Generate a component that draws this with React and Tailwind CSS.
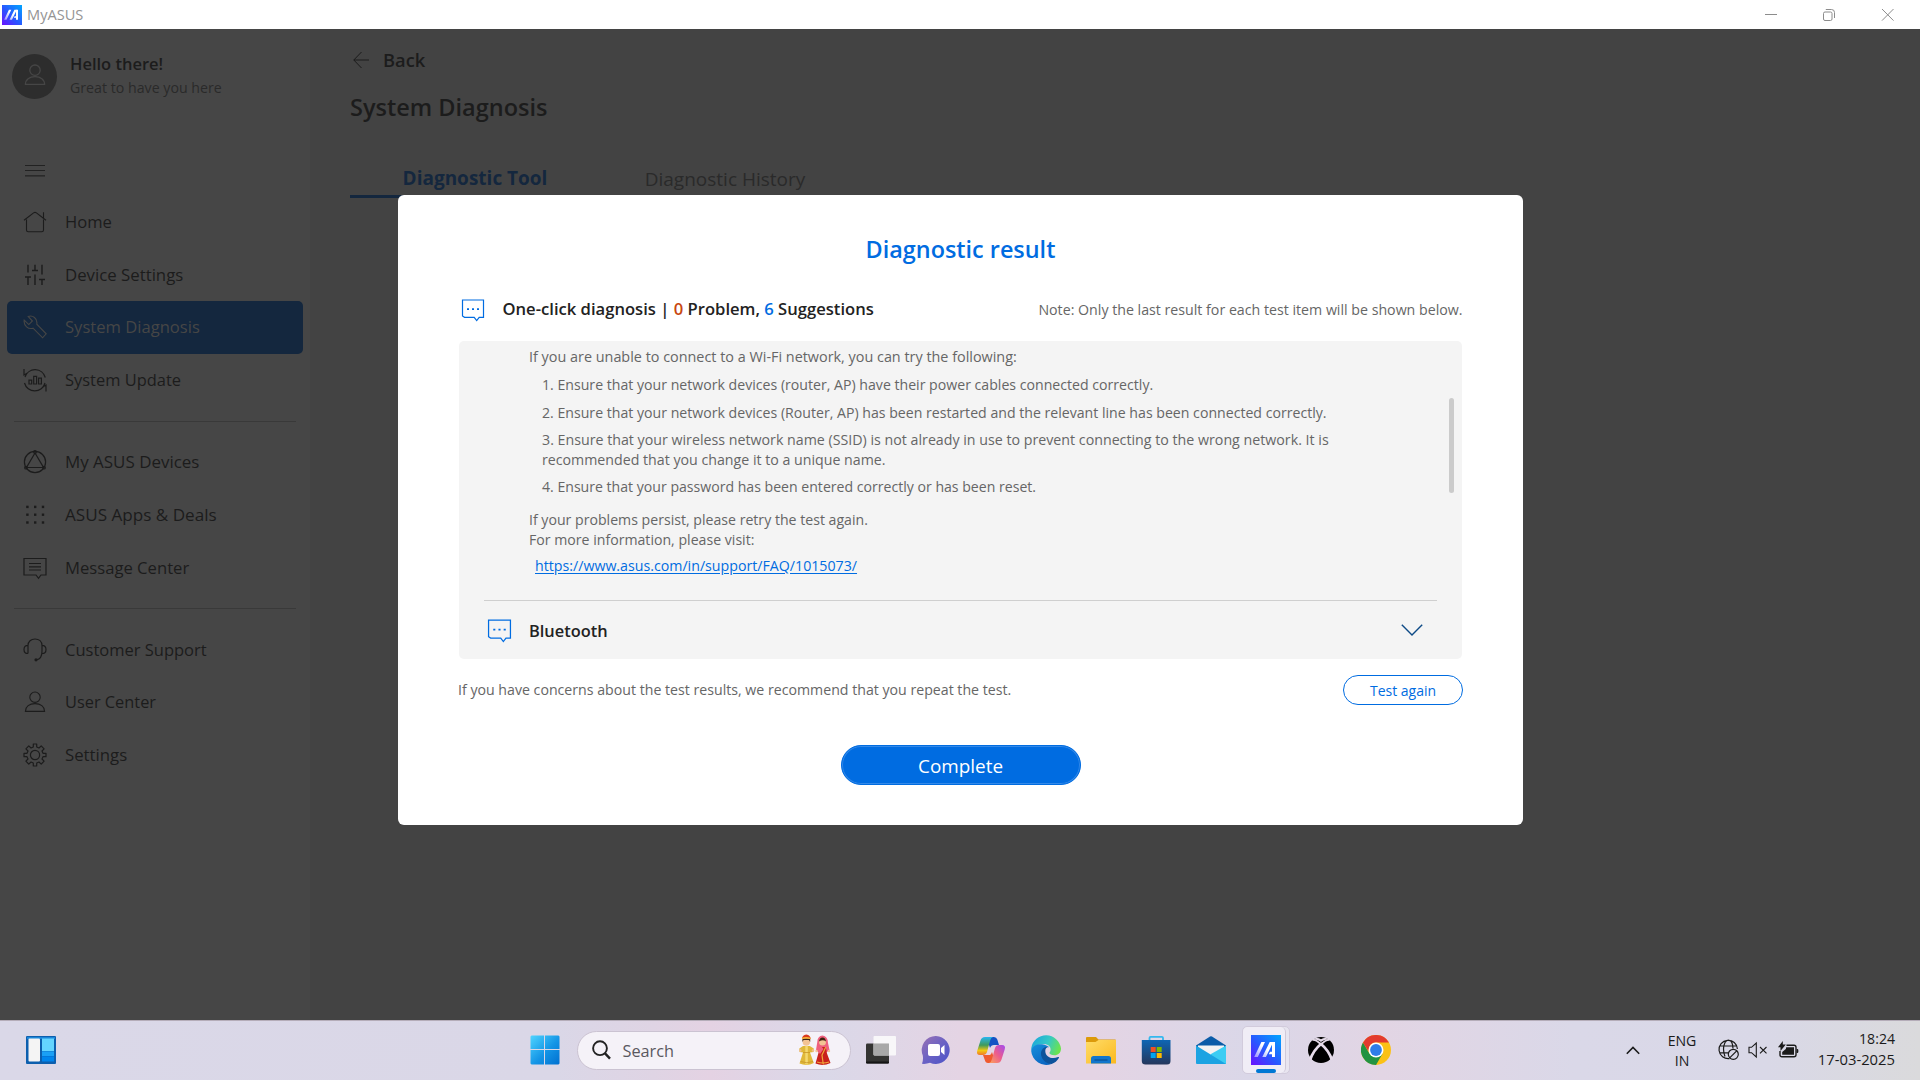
const navGroups = [
  [
    { label: "Home", icon: HomeIcon, size: "text-[16.6px]" },
    { label: "Device Settings", icon: SlidersIcon, size: "text-[16.8px]" },
    { label: "System Diagnosis", icon: WrenchIcon, size: "text-[16.6px]", active: true },
    { label: "System Update", icon: UpdateIcon, size: "text-[16.45px]" },
  ],
  [
    { label: "My ASUS Devices", icon: DevicesIcon, size: "text-[16.95px]" },
    { label: "ASUS Apps & Deals", icon: DotsIcon, size: "text-[17.1px]" },
    { label: "Message Center", icon: MessageIcon, size: "text-[16.65px]" },
  ],
  [
    { label: "Customer Support", icon: HeadsetIcon, size: "text-[16.5px]" },
    { label: "User Center", icon: UserIcon, size: "text-[16.35px]" },
    { label: "Settings", icon: GearIcon, size: "text-[16.8px]" },
  ],
];

function Line({ children, className = "", w = 1.1, size = 24 }) {
  return (
    <svg width={size} height={size} viewBox="0 0 24 24" fill="none" stroke="currentColor" strokeWidth={w} className={`shrink-0 ${className}`}>
      {children}
    </svg>
  );
}

function HomeIcon() {
  return (
    <Line>
      <path d="M1 10.3 10.6 2.9Q12 1.9 13.4 2.9L23 10.3M20.5 8V2.3M3.5 9.5V20Q3.5 21.8 5.3 21.8H18.7Q20.5 21.8 20.5 20V9.5" />
    </Line>
  );
}
function SlidersIcon() {
  return (
    <Line w={1.4}>
      <path d="M5 1.8V9.5M12 1.8V7.5M19 1.8V11.5M9 7.5H15M2 14H8M5 14V22M12 11.5V22M16 16.5H22M19 16.5V22" />
    </Line>
  );
}
function WrenchIcon() {
  return (
    <Line>
      <path d="M5.2 1.5C9.5-.2 14.8 3.2 13.8 9.2L23.2 18.8 19.6 22.8 10 13.2C5.5 14.6 .3 10.8 1.2 5.2L5.8 9.6 9.4 6Z" />
    </Line>
  );
}
function UpdateIcon() {
  return (
    <Line w={1.2}>
      <path d="M2 9A10.6 10.6 0 0 1 22.3 9.5M1 1V7L4.5 5M22 15A10.6 10.6 0 0 1 1.5 15M23 23.5V17L19.5 19M6 12.2H8.7V16H6ZM10.7 8.4H13.6V16H10.7ZM15.6 10.2H18.4V16H15.6Z" />
    </Line>
  );
}
function DevicesIcon() {
  return (
    <Line w={1.2}>
      <circle cx="12" cy="12" r="10.6" />
      <path d="M12 3 3.5 17.5H20.5Z" />
      <circle cx="12" cy="2" r="1.3" />
      <circle cx="3" cy="17.7" r="1.3" />
      <circle cx="21" cy="17.7" r="1.3" />
    </Line>
  );
}
function DotsIcon() {
  const p = [3.2, 11, 18.8];
  return (
    <Line>
      {p.map((y) => p.map((x) => <rect key={`${x}-${y}`} x={x} y={y - 0.5} width="2.4" height="2.4" fill="currentColor" stroke="none" />))}
    </Line>
  );
}
function MessageIcon() {
  return (
    <Line w={1.2}>
      <path d="M1 2.5H23V19H18L15.5 22.3 13 19H1ZM6 7.5H18M6 10.8H18M6 14H18" />
    </Line>
  );
}
function HeadsetIcon() {
  return (
    <Line w={1.2}>
      <path d="M5 15.5V7.6C5 3.5 8 1 12 1S19 3.5 19 7.6V13C19 18 17.5 21.3 13.5 21.8M5 7.3C2.5 7.3 1 9 1 11.4S2.5 15.5 5 15.5M19 7.3C21.5 7.3 23 9 23 11.4S21.5 15.5 19 15.5" />
      <circle cx="13" cy="21.8" r="1.6" fill="currentColor" stroke="none" />
    </Line>
  );
}
function UserIcon({ w = 1.1 }) {
  return (
    <Line w={w}>
      <circle cx="12" cy="7.2" r="5.2" />
      <path d="M2.4 21.4C2.4 16.5 6.5 13.6 12 13.6S21.6 16.5 21.6 21.4Z" />
    </Line>
  );
}
function GearIcon() {
  return (
    <Line w={1.2}>
      <circle cx="12" cy="12" r="4.6" />
      <path d="M10.3 1H13.7V4L16 5 18.2 2.9 21.1 5.8 19 8 20 10.3H23V13.7H20L19 16 21.1 18.2 18.2 21.1 16 19 13.7 20V23H10.3V20L8 19 5.8 21.1 2.9 18.2 5 16 4 13.7H1V10.3H4L5 8 2.9 5.8 5.8 2.9 8 5 10.3 4Z" strokeLinejoin="round" />
    </Line>
  );
}

function MyAsusLogo({ size }) {
  return (
    <svg width={size} height={size} viewBox="0 0 30 30" className="shrink-0">
      <defs>
        <linearGradient id="ma" x1="0" y1="1" x2="1" y2="0">
          <stop offset="0" stopColor="#6a10ff" />
          <stop offset=".45" stopColor="#2a55ff" />
          <stop offset="1" stopColor="#00a6ff" />
        </linearGradient>
        <linearGradient id="mb" x1="0" y1="1" x2="1" y2="0">
          <stop offset="0" stopColor="#fff" stopOpacity=".45" />
          <stop offset=".6" stopColor="#fff" />
        </linearGradient>
      </defs>
      <path fill="url(#ma)" d="M0 0H30V30H0Z" />
      <path fill="url(#mb)" d="M3.2 22 10.4 7H14L6.8 22ZM11.3 22 18.7 7H22.3L14.9 22Z" />
      <path fill="#fff" d="M20.8 7H24V22H21V19.2H17.8L19 16.8H21V10Z" />
    </svg>
  );
}

function SuggestionIcon({ size = 24 }) {
  return (
    <Line size={size} w={1.2} className="text-[#006ce1]">
      <path d="M1.5 2H22.5V19.3H18.2L15.7 22.6 13.2 19.3H3.5L1.5 18Z" />
      <path stroke="none" fill="currentColor" d="M6 10.2H8V12H6ZM11 10.2H13V12H11ZM16 10.2H18V12H16Z" />
    </Line>
  );
}

function TitleBar() {
  return (
    <header className="flex h-[29px] items-center bg-white pl-[2px]">
      <MyAsusLogo size={20} />
      <span className="ml-[5px] text-[14.6px] leading-[29px] text-[#949494]">MyASUS</span>
      <div className="ml-auto flex text-[#8c8c8c]">
        <svg width="58" height="28" viewBox="0 0 58 28" fill="none" stroke="currentColor">
          <path d="M23 13.5H35" />
        </svg>
        <svg width="59" height="28" viewBox="0 0 59 28" fill="none" stroke="currentColor">
          <rect x="23.5" y="11" width="8.5" height="8.5" rx="1.5" />
          <path d="M25.8 8.5H31.5Q34.5 8.5 34.5 11.5V17" />
        </svg>
        <svg width="61" height="28" viewBox="0 0 61 28" fill="none" stroke="currentColor">
          <path d="M23 8 34.5 19.6M34.5 8 23 19.6" />
        </svg>
      </div>
    </header>
  );
}

function NavItem({ label, icon: Icon, active, size }) {
  return (
    <li className={`ml-[7px] flex h-[52.6px] w-[296px] items-center rounded-[5px] pl-4 ${active ? "bg-[#14273e] text-[#464646]" : "text-[#1c1c1c]"}`}>
      <Icon />
      <span className={`ml-[18px] leading-[24px] whitespace-nowrap ${size}`}>{label}</span>
    </li>
  );
}

function Sidebar() {
  return (
    <aside className="w-[310px] bg-[#464646]">
      <div className="flex h-[92px] items-start pt-[25px] pl-[12px]">
        <div className="flex h-[45px] w-[45px] items-center justify-center rounded-full bg-[#2d2d2d] pb-[3px] text-[#464646]">
          <UserIcon w={1.3} />
        </div>
        <div className="ml-[13px] text-[#1c1c1c]">
          <div className="-mt-[2px] text-[16.5px] leading-[24px] font-semibold">Hello there!</div>
          <div className="text-[14.2px] leading-[24px] text-[#2a2a2a]">Great to have you here</div>
        </div>
      </div>
      <div className="h-[75px] pt-[38px] pl-[25px] text-[#222]">
        <svg width="20" height="24" viewBox="0 0 20 24" fill="none" stroke="currentColor" strokeWidth="1.2">
          <path d="M0 6.5H20M0 11.5H20M0 16.8H20" />
        </svg>
      </div>
      {navGroups.map((group, i) => (
        <div key={group[0].label}>
          {i > 0 && (
            <div className="flex h-[29.7px] items-center pl-[14px]">
              <div className="h-px w-[282px] bg-[#393939]" />
            </div>
          )}
          <ul>
            {group.map((item) => (
              <NavItem key={item.label} {...item} />
            ))}
          </ul>
        </div>
      ))}
    </aside>
  );
}

function DiagnosisPage() {
  return (
    <main className="flex-1 bg-[#434343] pl-[40px] text-[#1c1c1c]">
      <div className="flex h-[62px] items-center">
        <svg width="16" height="18" viewBox="0 0 16 18" fill="none" stroke="currentColor" className="ml-[3px]">
          <path d="M8.5 1 .8 9 8.5 17M.8 9H16" />
        </svg>
        <span className="ml-[14px] text-[18.3px] leading-[26px] font-semibold">Back</span>
      </div>
      <h1 className="text-[23.5px] leading-[32px] font-semibold">System Diagnosis</h1>
      <div className="mt-[39px] flex">
        <div className="flex h-[36px] w-[250px] items-center justify-center border-b-[3px] border-[#14273e] text-[19px] font-bold text-[#14273e]">
          Diagnostic Tool
        </div>
        <div className="flex h-[36px] w-[250px] items-center justify-center pb-[1px] text-[19px] text-[#2a2a2a]">Diagnostic History</div>
      </div>
    </main>
  );
}

function ResultPanel() {
  return (
    <section className="mx-auto mt-4 flex h-[318px] w-[1003px] flex-col rounded-[5px] bg-[#f4f4f4]">
      <div className="flex h-[259px]">
        <div className="w-[920px] pt-[6px] pl-[70px] text-[14.14px] leading-[20px] text-[#666]">
          <p className="text-[14.4px]">If you are unable to connect to a Wi-Fi network, you can try the following:</p>
          <ol className="mt-[8px] flex flex-col gap-[7.5px] pl-[13px]">
            <li>1. Ensure that your network devices (router, AP) have their power cables connected correctly.</li>
            <li>2. Ensure that your network devices (Router, AP) has been restarted and the relevant line has been connected correctly.</li>
            <li>
              <span className="text-[14.22px]">3. Ensure that your wireless network name (SSID) is not already in use to prevent connecting to the wrong network. It is</span>
              <br />
              <span className="text-[14.2px]">recommended that you change it to a unique name.</span>
            </li>
            <li className="-mt-[1px] text-[14.1px]">4. Ensure that your password has been entered correctly or has been reset.</li>
          </ol>
          <p className="mt-[13px]">
            If your problems persist, please retry the test again.
            <br />
            For more information, please visit:
          </p>
          <a className="mt-[6px] block pl-[6px] text-[14.2px] text-[#006ce1] underline underline-offset-2">https://www.asus.com/in/support/FAQ/1015073/</a>
        </div>
        <div className="mt-[57px] ml-[70px] h-[95px] w-[5px] rounded-full bg-[#cbcbcb]" />
      </div>
      <div className="mx-[25px] flex h-[59px] items-center border-t border-[#cfcfcf] pr-[14px]">
        <div className="ml-[3px]">
          <SuggestionIcon size={25} />
        </div>
        <span className="ml-[17px] pt-[2px] text-[16.4px] leading-[24px] font-semibold text-[#222]">Bluetooth</span>
        <svg width="22" height="12" viewBox="0 0 22 12" fill="none" stroke="#0d4a86" strokeWidth="1.4" className="ml-auto">
          <path d="M.8.8 11 11 21.2.8" />
        </svg>
      </div>
    </section>
  );
}

function ResultDialog() {
  return (
    <div role="dialog" className="absolute top-[195px] left-[398px] flex h-[630px] w-[1125px] flex-col rounded-[6px] bg-white">
      <h2 className="mt-[38px] text-center text-[23.4px] leading-[32px] font-semibold text-[#006ce1]">Diagnostic result</h2>
      <div className="mx-auto mt-[28px] flex h-[32px] w-[1004px] items-center">
        <div className="ml-[2px] pt-[1px]">
          <SuggestionIcon />
        </div>
        <h3 className="-mr-1 ml-[18px] text-[16.62px] font-semibold whitespace-pre text-[#222]">
          One-click diagnosis | <span className="text-[#c8470f]">0</span> Problem, <span className="text-[#006ce1]">6</span> Suggestions
        </h3>
        <span className="mt-[1px] ml-auto text-[14.2px] text-[#666]">Note: Only the last result for each test item will be shown below.</span>
      </div>
      <ResultPanel />
      <div className="mx-auto mt-4 flex h-[30px] w-[1005px] items-center justify-between">
        <span className="text-[14.16px] text-[#666]">If you have concerns about the test results, we recommend that you repeat the test.</span>
        <button className="h-[30px] w-[120px] rounded-full border border-[#006ce1] pt-[1px] text-[14px] text-[#006ce1]">Test again</button>
      </div>
      <button className="mx-auto mt-[40px] h-[40px] w-[240px] rounded-full border border-[#006ce1] bg-[#006ce1] pt-[2px] text-[18.9px] text-white shadow-[inset_0_0_0_1px_#3389e8]">
        Complete
      </button>
    </div>
  );
}

function StartIcon() {
  return (
    <svg width="30" height="30" viewBox="0 0 30 30">
      <defs>
        <linearGradient id="win" x1="0" y1="0" x2="1" y2="1">
          <stop offset="0" stopColor="#4fd4ff" />
          <stop offset=".55" stopColor="#1495e6" />
          <stop offset="1" stopColor="#0070d0" />
        </linearGradient>
      </defs>
      <path fill="url(#win)" d="M1.5.5H14V14H.5V1.5ZM15 .5H28.5L29.5 1.5V14H15ZM.5 15H14V29.5H1.5L.5 28.5ZM15 15H29.5V28.5L28.5 29.5H15Z" />
    </svg>
  );
}

function WidgetsIcon() {
  return (
    <svg width="30" height="28" viewBox="0 0 30 28">
      <rect width="30" height="28" rx="1" fill="#0c5fae" />
      <rect x="1" y="1" width="28" height="2" fill="#1b86d8" />
      <rect x="2.5" y="2.5" width="11.5" height="23" rx="1" fill="#f4f4f4" />
      <path fill="#64d5ff" d="M16 2.5H28V15H16Z" />
      <path fill="#1aa0f5" d="M16 15.3H28V20H16Z" />
      <path fill="#0085ec" d="M16 20.3H28V25.5H16Z" />
    </svg>
  );
}

function CoupleArt() {
  return (
    <svg width="32" height="32" viewBox="0 0 32 32">
      <path fill="#e0b83a" d="M4 12H10.8L14.8 14.5 14.6 18 11 18.5 14.8 29Q8 32.5.5 29.5L4 18.5 .5 18 .3 14.5Z" />
      <path fill="#f4d870" d="M6.3 12H8.8V30.5H6.3Z" />
      <path stroke="#c8962a" strokeWidth=".8" fill="none" d="M4 18.5H11M1.5 27.5Q8 30 14 27.5" />
      <circle cx="1.3" cy="16.5" r="1.2" fill="#f0bd8c" />
      <circle cx="14" cy="16.5" r="1.2" fill="#f0bd8c" />
      <circle cx="7.3" cy="8" r="3.7" fill="#f3c394" />
      <path fill="#3b2415" d="M3.4 8V4.5H11.2V8L10 6H4.6Z" />
      <path fill="#d9391f" d="M3 5Q3 1 7.3.5 11.6 1 11.6 5Q7 3.5 3 5Z" />
      <path fill="#f7b733" d="M3 3.8Q7 2.2 11.6 3.8V5.2Q7 3.8 3 5.2Z" />
      <path fill="#ef5f7d" d="M23.5 1.5Q28.8 2 29 9L30.5 16 28 18H19L17 16 18.3 8Q18.5 2 23.5 1.5Z" />
      <circle cx="23.5" cy="8" r="3.5" fill="#f3c394" />
      <path fill="#40210f" d="M20 7.5Q20.6 3.5 23.5 3.5T27 7.5Q24 5.2 20 7.5Z" />
      <path fill="#c9201c" d="M20.5 13H26.8L28 19.5 31.5 29Q24 32.5 16.5 29.5L19.3 19.5Z" />
      <path fill="#ef5f7d" d="M19 12H22L24.5 15 21 20 19 17Z" />
      <path stroke="#f0a73a" strokeWidth="1.2" d="M26.8 13 23 21 24.3 30.5M18 28Q24 30 30 28" fill="none" />
      <circle cx="17.5" cy="17" r="1.2" fill="#f3c394" />
      <circle cx="30" cy="17" r="1.2" fill="#f3c394" />
    </svg>
  );
}

function TaskViewIcon() {
  return (
    <svg width="30" height="30" viewBox="0 0 30 30">
      <rect x="0" y="8.5" width="23" height="20" rx="1.2" fill="#343432" />
      <rect x="0" y="26.5" width="23" height="2" rx="1" fill="#151515" />
      <rect x="7.5" y="1" width="22.5" height="19.5" rx="1" fill="#fafafa" opacity=".93" />
      <path fill="#a8a8a8" d="M7.5 8.5H23V20.5H8.5L7.5 19.5Z" />
    </svg>
  );
}

function ChatIcon() {
  return (
    <svg width="30" height="30" viewBox="0 0 30 30">
      <defs>
        <linearGradient id="chat" x1="0" y1="0" x2="1" y2="1">
          <stop offset="0" stopColor="#9a72b4" />
          <stop offset=".5" stopColor="#6b62c4" />
          <stop offset="1" stopColor="#4a52c8" />
        </linearGradient>
      </defs>
      <path fill="url(#chat)" d="M15 1A14 14 0 1 1 9 27.8Q5 29.3 1 28.8 2.5 25 1.8 20.5A14 14 0 0 1 15 1Z" />
      <rect x="7" y="9" width="12" height="12" rx="2" fill="#fff" />
      <path fill="#fff" d="M20 13 23.5 10V20L20 17Z" />
    </svg>
  );
}

function CopilotIcon() {
  return (
    <svg width="30" height="28" viewBox="0 0 30 28">
      <defs>
        <linearGradient id="cpa" x1="0" y1="0" x2="0" y2="1">
          <stop offset="0" stopColor="#27b6f0" />
          <stop offset=".45" stopColor="#3f9a5c" />
          <stop offset=".75" stopColor="#f2c811" />
          <stop offset="1" stopColor="#f0762b" />
        </linearGradient>
        <linearGradient id="cpb" x1="1" y1="0" x2="0" y2="1">
          <stop offset="0" stopColor="#a24bf0" />
          <stop offset=".5" stopColor="#ec5c8c" />
          <stop offset="1" stopColor="#fca45a" />
        </linearGradient>
      </defs>
      <path fill="#1453c4" d="M10 1H18Q20.5 1 21.3 3.5L23 9H18Q15 9 14 12L12 6Z" />
      <path fill="#ef5a30" d="M7 19H14Q15 19 16 16L18 22 16 27H12Q9.5 27 8.8 24Z" />
      <path fill="url(#cpa)" d="M9 1H17Q14.8 1.5 14 5L11 16Q10 19 7 19H4Q0 19 1.3 14.5L4.5 4.5Q5.5 1 9 1Z" />
      <path fill="url(#cpb)" d="M21 27H13Q15.2 26.5 16 23L19 12Q20 9 23 9H26Q30 9 28.7 13.5L25.5 23.5Q24.5 27 21 27Z" />
    </svg>
  );
}

function EdgeIcon() {
  return (
    <svg width="30" height="30" viewBox="0 0 30 30">
      <defs>
        <linearGradient id="e1" x1="0" y1=".2" x2="1" y2=".5">
          <stop offset="0" stopColor="#1aa5dc" />
          <stop offset=".55" stopColor="#35c8c6" />
          <stop offset="1" stopColor="#6be34f" />
        </linearGradient>
        <linearGradient id="e2" x1="0" y1="0" x2=".6" y2="1">
          <stop offset="0" stopColor="#168fdc" />
          <stop offset="1" stopColor="#0b66c2" />
        </linearGradient>
      </defs>
      <path fill="url(#e1)" d="M.3 13A15 15 0 0 1 30 13.5C30 18 27 20.3 23.5 20.3 20.5 20.3 18.4 19.2 18.4 18 18.4 17.2 19.6 16.6 19.6 14.4 19.6 11.5 17 9 12.5 9 6 9 1.5 12 .3 16Z" />
      <path fill="url(#e2)" d="M.2 16C1 11 5.5 8.7 11 9.3 15 9.8 17.5 11.5 18 12.3 13 11.5 10 15.5 11.4 20.3 12.8 24.5 16.5 27.7 20.5 28.9A15 15 0 0 1 .2 16Z" />
      <path fill="#0c539c" d="M13.5 12.4C10 14.5 9.3 18 10.6 21.8 12.3 26.5 16.5 29 20.6 28.9 23.5 28 26.5 25.7 28 22.7 28.2 22 27.7 21.8 27 22.1 21 24.7 14.5 22 14.3 16.2 14.2 14.3 15 12.9 16.5 12 15.5 11.8 14.5 11.9 13.5 12.4Z" />
    </svg>
  );
}

function FolderIcon() {
  return (
    <svg width="30" height="28" viewBox="0 0 30 28">
      <defs>
        <linearGradient id="fo" x1="0" y1="0" x2="1" y2="1">
          <stop offset="0" stopColor="#ffdc68" />
          <stop offset="1" stopColor="#fbb91f" />
        </linearGradient>
      </defs>
      <path fill="#dc9a0a" d="M0 2Q0 1 1 1H10L12.5 3.5H29Q30 3.5 30 4.5V10H0Z" />
      <path fill="url(#fo)" d="M0 6H9.5L12.5 4H30V27.5H0Z" />
      <path fill="#1276cc" d="M5 27.5V22.5Q5 20 7.5 20H22.5Q25 20 25 22.5V27.5Z" />
      <path stroke="#0a4f93" strokeWidth="1.2" d="M8.5 24H21.5" />
    </svg>
  );
}

function StoreIcon() {
  return (
    <svg width="30" height="30" viewBox="0 0 30 30">
      <defs>
        <linearGradient id="st" x1="0" y1="0" x2="0" y2="1">
          <stop offset="0" stopColor="#0e66b4" />
          <stop offset="1" stopColor="#25375c" />
        </linearGradient>
      </defs>
      <path fill="none" stroke="#34b8ee" strokeWidth="1.8" d="M8.5 6V3Q8.5 1.9 9.6 1.9H20.9Q22 1.9 22 3V6" />
      <path fill="url(#st)" d="M.8 5H29.5V26Q29.5 29.5 26 29.5H4.5Q.8 29.5.8 26Z" />
      <path fill="#f25022" d="M9.7 12H14.7V17H9.7Z" />
      <path fill="#7fba00" d="M15.7 12H20.7V17H15.7Z" />
      <path fill="#00a4ef" d="M9.7 18H14.7V23H9.7Z" />
      <path fill="#ffb900" d="M15.7 18H20.7V23H15.7Z" />
    </svg>
  );
}

function MailIcon() {
  return (
    <svg width="30" height="30" viewBox="0 0 30 30">
      <path fill="#0b5ca8" d="M0 10.5 14 1.6Q15 1 16 1.6L30 10.5V18H0Z" />
      <path fill="#f3f3f3" d="M2 10.5H28V18L15 24 2 18Z" />
      <path fill="#3ccdf3" d="M30 10.5V29H10L15 19Z" />
      <path fill="#1ca3e2" d="M0 10.5 30 29H1Q0 29 0 28Z" />
    </svg>
  );
}

function XboxIcon() {
  return (
    <svg width="28" height="28" viewBox="0 0 28 28">
      <circle cx="14" cy="14" r="13" fill="#000" />
      <path fill="#e6dcea" d="M6.2 3.6C9 3.2 12 4.6 14 6 16 4.6 19 3.2 21.8 3.6 20.2 2 17.5 1.2 14 3.2 10.5 1.2 7.8 2 6.2 3.6Z" />
      <path fill="none" stroke="#e6dcea" strokeWidth="2.8" d="M3.2 23.6C5.2 17.8 10.3 11 14 8 17.7 11 22.8 17.8 24.8 23.6" />
      <path fill="none" stroke="#e6dcea" strokeWidth="1.8" d="M5.5 4C8.5 3.5 12 6.5 14 8.5 16 6.5 19.5 3.5 22.5 4" />
    </svg>
  );
}

function ChromeIcon() {
  return (
    <svg width="30" height="30" viewBox="0 0 30 30">
      <circle cx="15" cy="15" r="15" fill="#fbc116" />
      <path fill="#229342" d="M2 7.5A15 15 0 0 0 15 30L21.5 18.8 15 15 8.5 18.8Z" />
      <path fill="#e33b2e" d="M2 7.5A15 15 0 0 1 28 7.5H15A7.5 7.5 0 0 0 8 12.5L7.5 16.5Z" />
      <circle cx="15" cy="15" r="7.5" fill="#fff" />
      <circle cx="15" cy="15" r="5.9" fill="#2f7de9" />
    </svg>
  );
}

function MyAsusTile() {
  return (
    <div className="relative flex h-[48px] w-[48px] rounded-[5px] border border-[#d2cbdc] bg-[#e8e5f0]">
      <div className="flex h-[46px] w-[43px] items-center justify-center rounded-[5px] border-r border-[#cfc9d8] bg-[#f0edf6] pl-[5px]">
        <MyAsusLogo size={30} />
      </div>
      <div className="absolute bottom-0 left-[13px] h-[4px] w-[20px] rounded-full bg-[#0078d4]" />
    </div>
  );
}

const taskbarApps = [TaskViewIcon, ChatIcon, CopilotIcon, EdgeIcon, FolderIcon, StoreIcon, MailIcon, MyAsusTile, XboxIcon, ChromeIcon];

function Taskbar() {
  return (
    <footer className="flex h-[60px] items-center border-t border-[#b5adb9] bg-[linear-gradient(90deg,#dad8e8_0%,#dad7e7_29%,#dfd4e4_34%,#e4d2e3_37%,#dad8e8_43%,#e4d4e4_50%,#e4d4e4_57%,#dad7e8_65%,#e2d5e4_72%,#dad8e8_82%,#d9d8e7_92%,#dadadc_100%)] pb-[1px] text-[#1b1b1b]">
      <div className="flex w-[529.5px] pl-[26px]">
        <WidgetsIcon />
      </div>
      <StartIcon />
      <div className="ml-[17px] flex h-[39px] w-[274px] items-center rounded-full border border-[#cbc3d2] bg-[#f5f2f8] pr-[19px] pl-[14px]">
        <svg width="19" height="20" viewBox="0 0 19 20" fill="none" stroke="#222" strokeWidth="1.9">
          <circle cx="8" cy="8.2" r="6.9" />
          <path d="M12.8 13.2 18 18.6" strokeWidth="2.4" />
        </svg>
        <span className="ml-[12px] pt-[2px] text-[16.3px] text-[#5a5860]">Search</span>
        <div className="ml-auto">
          <CoupleArt />
        </div>
      </div>
      <div className="ml-[2.5px] flex">
        {taskbarApps.map((App, i) => (
          <div key={i} className="flex h-[50px] w-[55px] items-center justify-center">
            <App />
          </div>
        ))}
      </div>
      <div className="mr-[25px] ml-auto flex items-center text-[14.1px] leading-[20px]">
        <svg width="14" height="9" viewBox="0 0 14 9" fill="none" stroke="currentColor" strokeWidth="1.6">
          <path d="M.8 7.8 7 1.5 13.2 7.8" />
        </svg>
        <div className="ml-[27px] w-[30px] pt-[1px] text-center">
          ENG
          <br />
          IN
        </div>
        <svg width="22" height="22" viewBox="0 0 22 22" fill="none" stroke="currentColor" strokeWidth="1.2" className="ml-[21px]">
          <path d="M11.5 19.6A9.2 9.2 0 1 1 19.4 10M7 17.5C5.3 13 5.3 7 7 3.5 9 .3 12 .3 13.8 3.5 14.6 5.3 15 7.5 15 9.5M2 7H18.5M2 13.8H10" />
          <circle cx="15.3" cy="15.3" r="5" />
          <path d="M11.9 18.7 18.7 11.9" />
        </svg>
        <svg width="20" height="18" viewBox="0 0 20 18" fill="none" stroke="currentColor" strokeWidth="1.1" className="ml-[8px]">
          <path d="M1 6.3H3.5L8.3 2V16L3.5 11.7H1ZM12 6 18.5 12.3M18.5 6 12 12.3" />
        </svg>
        <svg width="22" height="18" viewBox="0 0 22 18" fill="none" stroke="currentColor" strokeWidth="1.4" className="ml-[10px]">
          <path d="M8.5 4.2H16Q18 4.2 18 6.2V13.8Q18 15.8 16 15.8H4Q2 15.8 2 13.8V10" />
          <path stroke="none" fill="currentColor" d="M8.2 6.2H16V13.8H4.2V11L7.8 8ZM18.6 8H19.6Q20.4 8 20.4 10T19.6 12H18.6ZM4.8 0V3.5H7.8L2.5 10V6.2H0Z" />
        </svg>
        <div className="-mt-[1px] w-[95px] text-right">
          18:24
          <br />
          <span className="text-[14.8px]">17-03-2025</span>
        </div>
      </div>
    </footer>
  );
}

export default function App() {
  return (
    <div className="relative flex h-[1080px] w-[1920px] flex-col overflow-hidden font-['Open_Sans','Noto_Sans',sans-serif]">
      <TitleBar />
      <div className="flex flex-1">
        <Sidebar />
        <DiagnosisPage />
      </div>
      <Taskbar />
      <ResultDialog />
    </div>
  );
}
